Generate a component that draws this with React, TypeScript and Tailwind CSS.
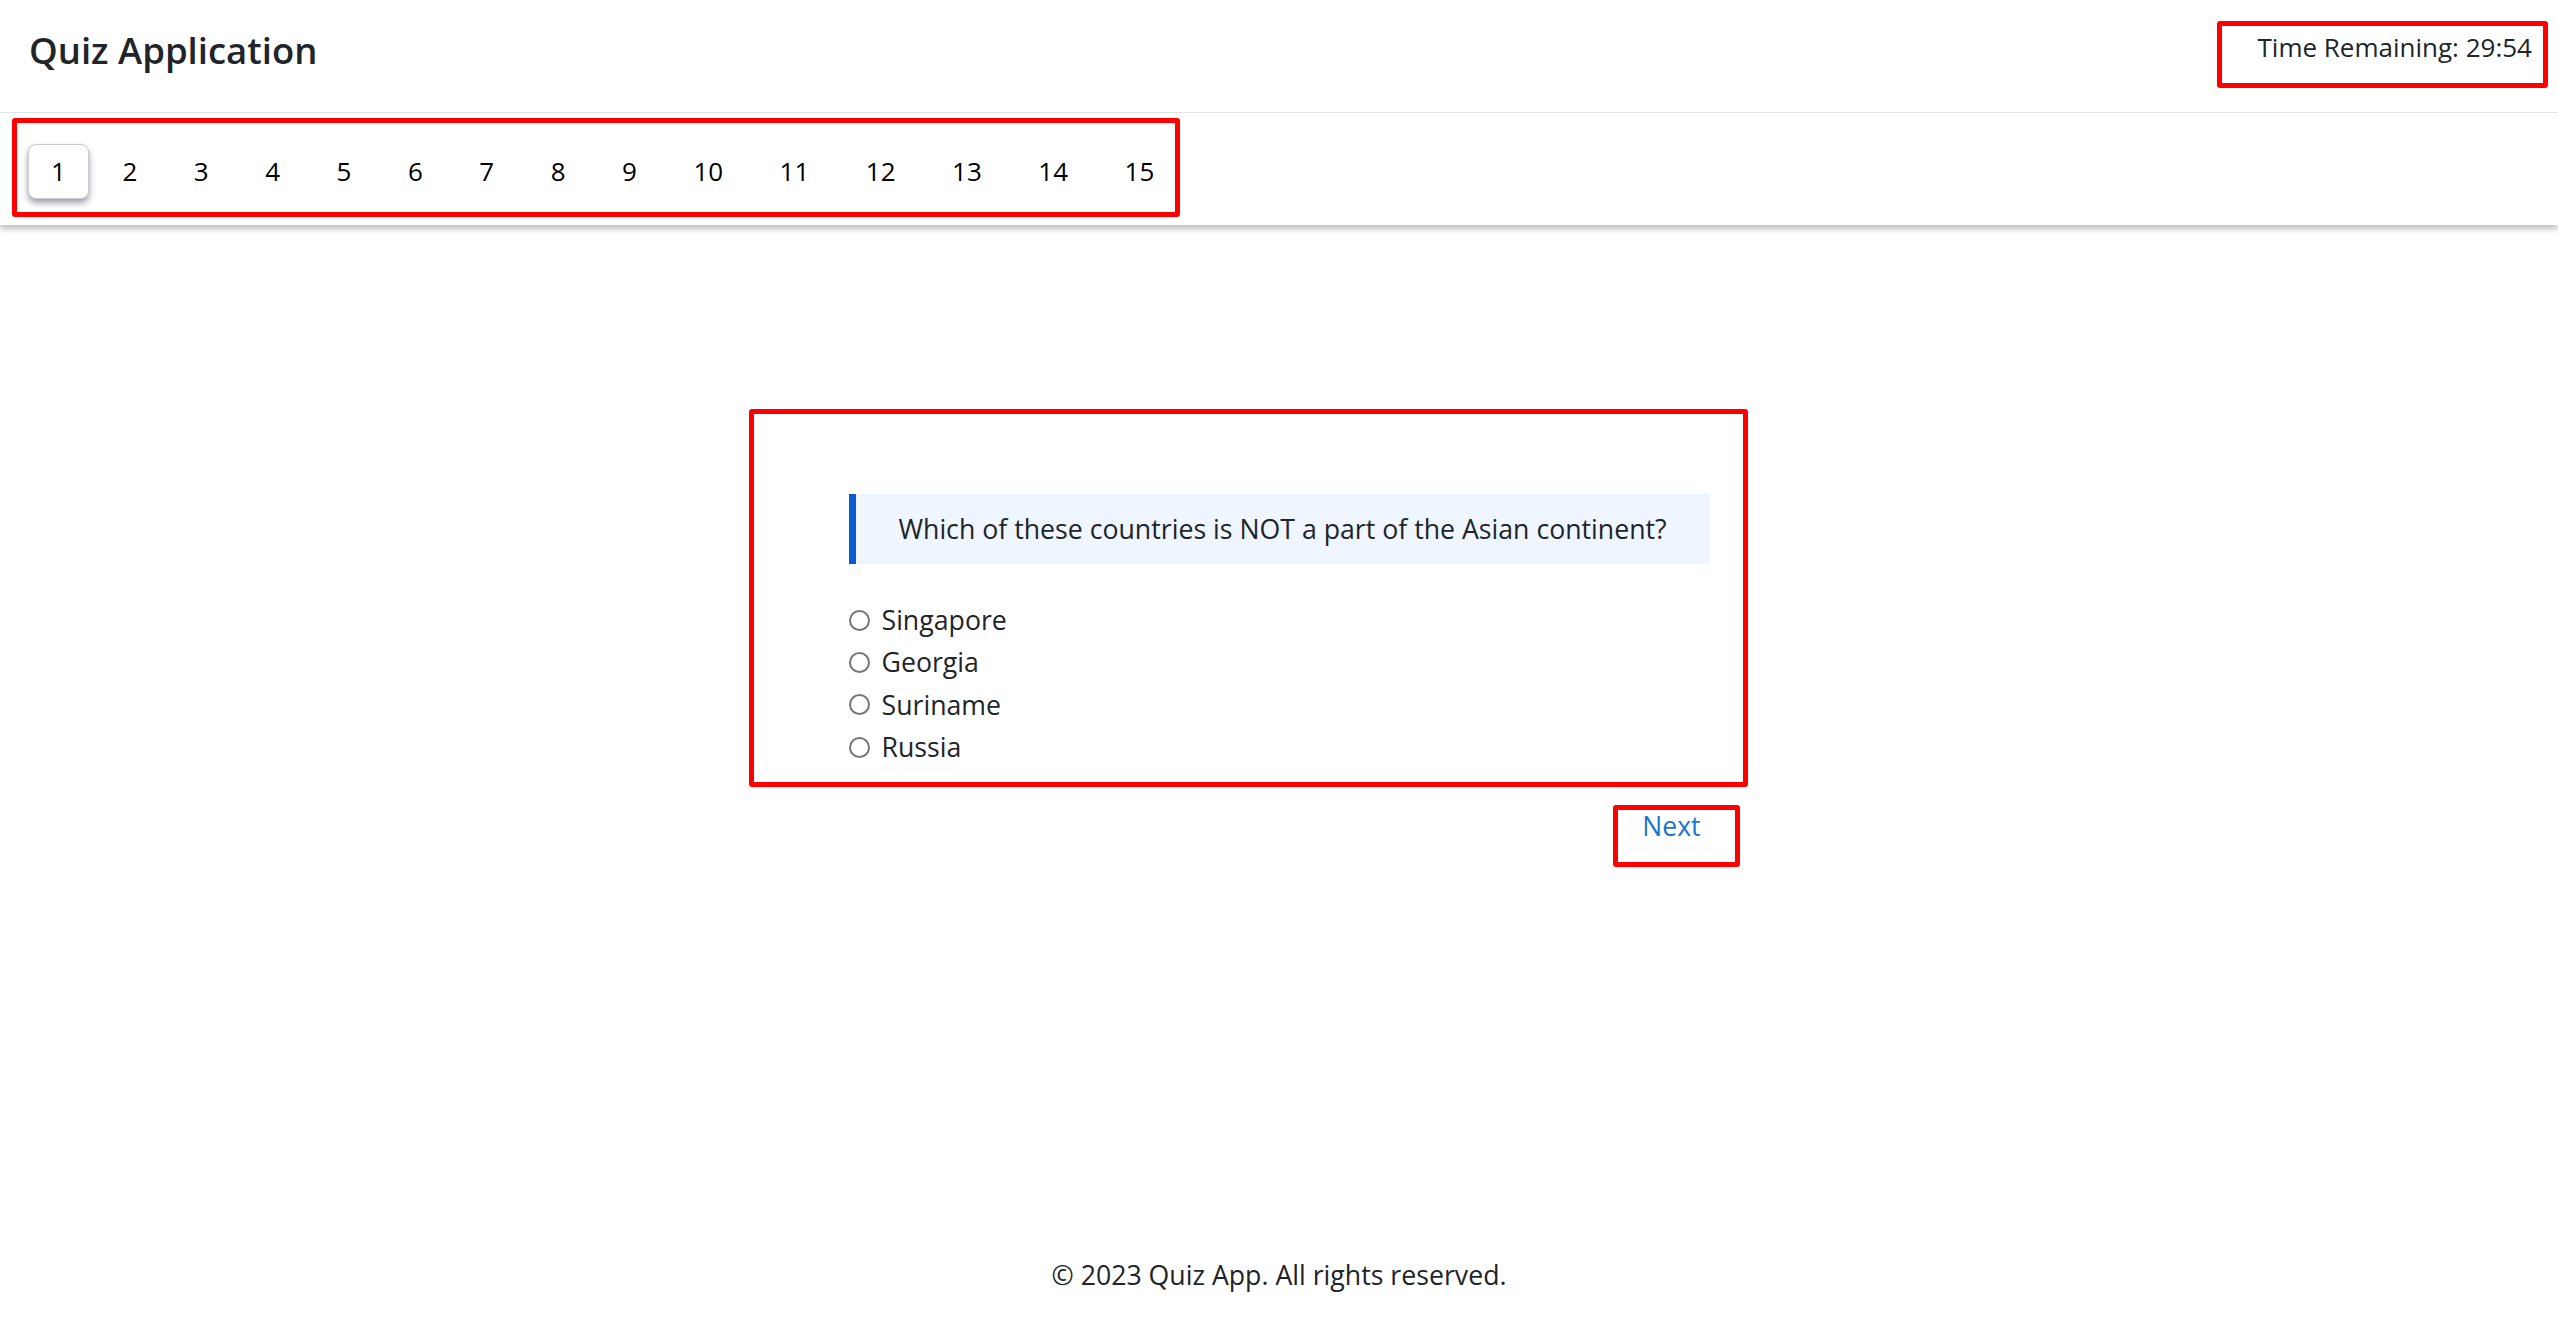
import React, { useState } from 'react';

const options = ['Singapore', 'Georgia', 'Suriname', 'Russia'];

const App: React.FC = () => {
  const [current, setCurrent] = useState(1);
  const [answer, setAnswer] = useState<string | null>(null);

  return (
    <div className="relative flex min-h-screen flex-col bg-white font-['Open_Sans',sans-serif] text-[#212529]">
      {/* Header */}
      <header className="flex h-[113px] items-start justify-between border-b border-[#e5e7eb] px-[26px] pt-[24px]">
        <h1 className="ml-[3px] text-[36.5px] font-semibold leading-[52px]">Quiz Application</h1>
        <div className="pt-[3px] text-[26px] leading-[40px]">Time Remaining: 29:54</div>
      </header>

      {/* Question navigation */}
      <nav className="flex h-[112px] items-center bg-white pl-[28px] pt-[4px] shadow-[0_4px_6px_rgba(0,0,0,0.25)]">
        <div className="flex items-center gap-[10.5px]">
          {Array.from({ length: 15 }, (_, i) => i + 1).map(n => (
            <button
              key={n}
              onClick={() => setCurrent(n)}
              className={
                n === current
                  ? 'h-[55px] rounded-[8px] border border-[#c9c9d1] bg-white px-[22px] text-[26px] text-[#000] shadow-[0_4px_6px_rgba(40,40,70,0.45)]'
                  : 'h-[55px] rounded-[8px] border border-transparent px-[22px] text-[26px] text-[#000]'
              }
            >
              {n}
            </button>
          ))}
        </div>
      </nav>

      {/* Question card */}
      <main className="flex flex-col items-center pt-[269px]">
        <div className="w-[861px]">
          <div className="flex h-[70px] items-center justify-center border-l-[7px] border-[#0b5bd0] bg-[#eff6ff] text-[26.7px]">
            Which of these countries is NOT a part of the Asian continent?
          </div>
          <div className="mt-[35px] flex flex-col">
            {options.map(opt => (
              <label key={opt} className="flex h-[42.3px] cursor-pointer items-center gap-[12px] text-[26.7px]">
                <span
                  onClick={() => setAnswer(opt)}
                  className={
                    answer === opt
                      ? 'h-[21px] w-[21px] rounded-full border-[6px] border-[#0b5bd0] bg-white'
                      : 'h-[21px] w-[21px] rounded-full border-2 border-[#767676] bg-white'
                  }
                />
                <span onClick={() => setAnswer(opt)}>{opt}</span>
              </label>
            ))}
          </div>
          <div className="mt-[38px] flex justify-end pr-[9px]">
            <button className="text-[26.5px] leading-[40px] text-[#1976d2]" onClick={() => setCurrent(Math.min(15, current + 1))}>
              Next
            </button>
          </div>
        </div>
      </main>

      {/* Footer */}
      <footer className="mt-auto pb-[23px] text-center text-[26.7px] leading-[40px]">
        © 2023 Quiz App. All rights reserved.
      </footer>

      {/* Red annotation boxes drawn over the screenshot */}
      <div className="pointer-events-none absolute left-[2217px] top-[21px] h-[67px] w-[331px] rounded-[3px] border-[5px] border-[#ff0000]" />
      <div className="pointer-events-none absolute left-[12px] top-[118px] h-[99px] w-[1168px] rounded-[3px] border-[5px] border-[#ff0000]" />
      <div className="pointer-events-none absolute left-[749px] top-[409px] h-[378px] w-[999px] rounded-[3px] border-[5px] border-[#ff0000]" />
      <div className="pointer-events-none absolute left-[1613px] top-[805px] h-[62px] w-[127px] rounded-[3px] border-[5px] border-[#ff0000]" />
    </div>
  );
};

export default App;
